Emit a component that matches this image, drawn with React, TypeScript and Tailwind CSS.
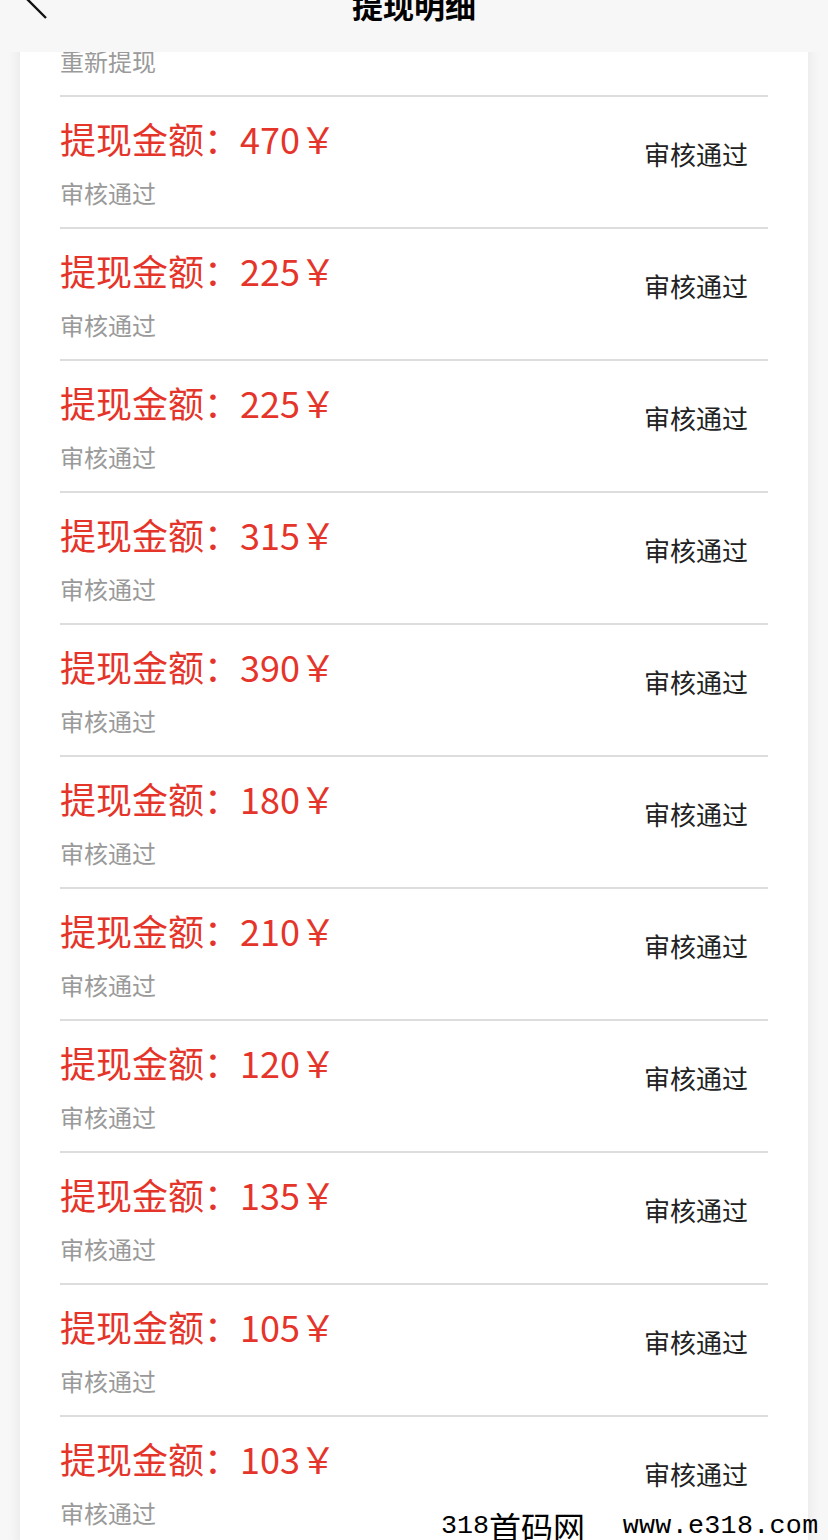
import type { FunctionComponent } from "react";

type Record = { amount: number; status: string; note: string };

const records: Record[] = [
  { amount: 500, status: "审核失败", note: "重新提现" },
  { amount: 470, status: "审核通过", note: "审核通过" },
  { amount: 225, status: "审核通过", note: "审核通过" },
  { amount: 225, status: "审核通过", note: "审核通过" },
  { amount: 315, status: "审核通过", note: "审核通过" },
  { amount: 390, status: "审核通过", note: "审核通过" },
  { amount: 180, status: "审核通过", note: "审核通过" },
  { amount: 210, status: "审核通过", note: "审核通过" },
  { amount: 120, status: "审核通过", note: "审核通过" },
  { amount: 135, status: "审核通过", note: "审核通过" },
  { amount: 105, status: "审核通过", note: "审核通过" },
  { amount: 103, status: "审核通过", note: "审核通过" },
];

const cjk = "font-['Noto_Sans_CJK_SC',sans-serif]";

const Row: FunctionComponent<Record> = ({ amount, status, note }) => (
  <div className="flex h-[132px] justify-between border-b-2 border-[#dddddd]">
    <div className="flex flex-col pt-[23px]">
      <div className="text-[36px] leading-[36px] text-[#e5352b]">
        提现金额：{amount}￥
      </div>
      <div className="mt-[25px] text-[24px] leading-[24px] text-[#9a9a9a]">
        {note}
      </div>
    </div>
    <div className="pr-[20px] pt-[44px] text-[26px] leading-[26px] text-[#222222]">
      {status}
    </div>
  </div>
);

const App: FunctionComponent = () => (
  <div className={`relative h-[1540px] overflow-hidden bg-[#f7f7f7] ${cjk}`}>
    <header className="absolute inset-x-0 top-0 z-10 h-[52px] overflow-hidden bg-[#f7f7f7]">
      <svg
        className="absolute left-[24px] top-[-22px]"
        width="26"
        height="44"
        viewBox="0 0 26 44"
        fill="none"
        stroke="#111111"
        strokeWidth="2.4"
      >
        <polyline points="22,4 4,22 22,40" />
      </svg>
      <div className="absolute inset-x-0 top-[-39px] flex h-[88px] items-center justify-center">
        <h1 className="text-[31px] font-bold text-black">提现明细</h1>
      </div>
    </header>

    <main className="mx-[20px] -mt-[35px] bg-white px-[40px] shadow-[0_0_14px_rgba(0,0,0,0.08)]">
      {records.map((r, i) => (
        <Row key={i} {...r} />
      ))}
    </main>

    <div className="absolute left-[441px] top-[1506px] flex items-center whitespace-pre text-black">
      <span className="font-['Liberation_Mono',monospace] text-[26.7px]">318</span>
      <span className="text-[32px] leading-[36px]">首码网</span>
      <span className="ml-[5px] font-['Liberation_Mono',monospace] text-[26.7px] tracking-[0.3px]">  www.e318.com</span>
    </div>
  </div>
);

export default App;
